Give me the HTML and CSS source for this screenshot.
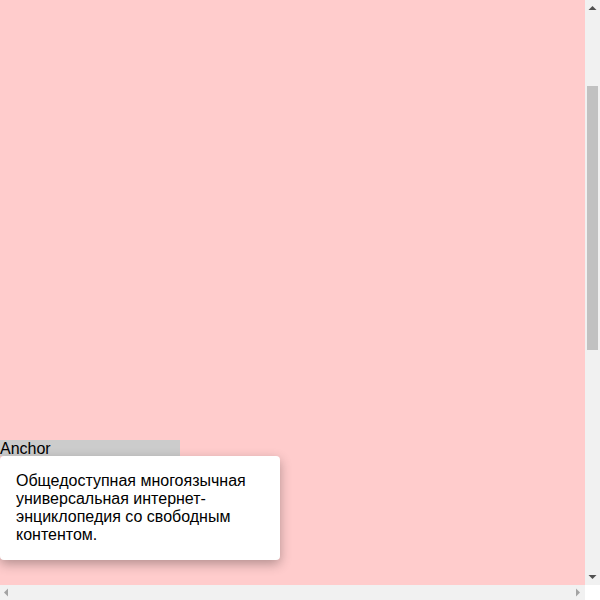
FILE: index.html
```html
<!DOCTYPE html>
<html lang="ru">
<head>
<meta charset="utf-8">
<link rel="stylesheet" href="styles.css">
</head>
<body>
<div class="page">
  <div class="anchor-wrap">
    <div class="anchor">Anchor</div>
    <div class="popover">Общедоступная многоязычная универсальная интернет-энциклопедия со свободным контентом.</div>
  </div>
</div>
<div class="vscroll">
  <svg class="arrow-up" width="15" height="15" viewBox="0 0 15 15"><polygon points="3.5,10 11.5,10 7.5,6" fill="#505050"/></svg>
  <div class="vtrack"><div class="vthumb"></div></div>
  <svg class="arrow-down" width="15" height="15" viewBox="0 0 15 15"><polygon points="3.5,5 11.5,5 7.5,9" fill="#505050"/></svg>
</div>
<div class="hscroll">
  <svg width="15" height="15" viewBox="0 0 15 15"><polygon points="8,3.5 8,11.5 4,7.5" fill="#a3a3a3"/></svg>
  <svg width="15" height="15" viewBox="0 0 15 15"><polygon points="6,3.5 6,11.5 10,7.5" fill="#a3a3a3"/></svg>
</div>
<div class="corner"></div>
</body>
</html>
```
FILE: styles.css
```css
html {
  overflow: hidden;
  background: #ffcccc;
}
body {
  margin: 0;
  height: 600px;
  overflow: hidden;
  font-family: "Liberation Sans", Arial, sans-serif;
  font-size: 16px;
  color: #000;
}
.page {
  padding-top: 440px;
}
.anchor-wrap {
  position: relative;
}
.anchor {
  width: 180px;
  height: 16px;
  line-height: 18px;
  background: #cccccc;
}
.popover {
  position: absolute;
  top: 16px;
  left: 0;
  width: 248px;
  padding: 16px;
  background: #fff;
  border-radius: 4px;
  box-shadow: 0 4px 12px rgba(0, 0, 0, 0.3);
  line-height: 18px;
  font-size: 16px;
}
.vscroll {
  position: fixed;
  top: 0;
  right: 0;
  width: 15px;
  height: 585px;
  background: #f1f1f1;
  display: flex;
  flex-direction: column;
}
.vscroll svg {
  display: block;
  flex: none;
}
.vtrack {
  flex: 1;
  padding-top: 71px;
}
.vthumb {
  width: 11px;
  height: 264px;
  margin-left: 2px;
  background: #c1c1c1;
}
.hscroll {
  position: fixed;
  left: 0;
  bottom: 0;
  width: 585px;
  height: 15px;
  background: #f1f1f1;
  display: flex;
  justify-content: space-between;
}
.hscroll svg {
  display: block;
}
.corner {
  position: fixed;
  right: 0;
  bottom: 0;
  width: 15px;
  height: 15px;
  background: #fff;
}
```
